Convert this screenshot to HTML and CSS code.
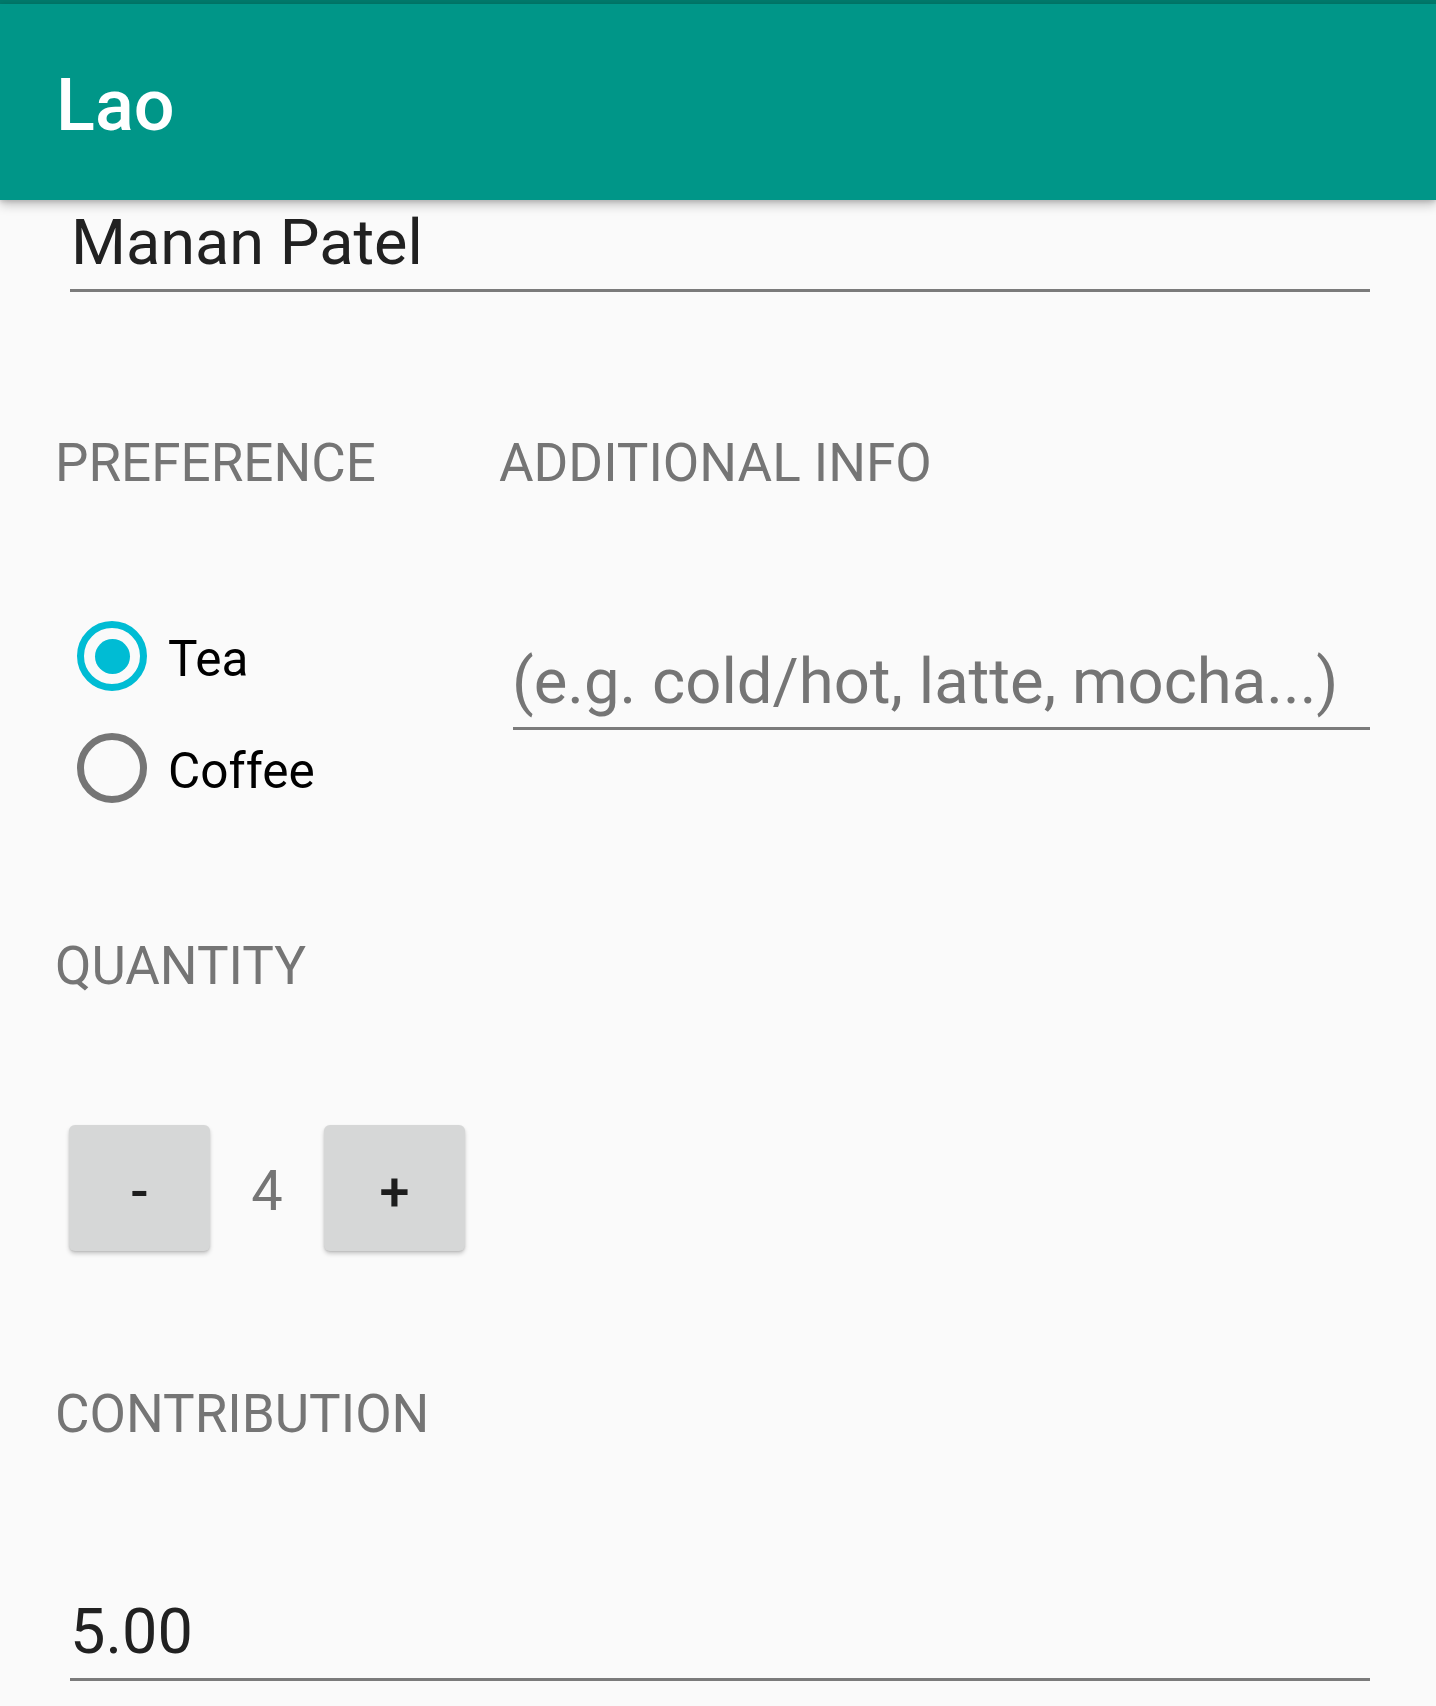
FILE: index.html
```html
<!DOCTYPE html>
<html lang="en">
<head>
<meta charset="utf-8">
<title>Lao</title>
<link rel="stylesheet" href="styles.css">
</head>
<body>
<div class="statusbar"></div>
<header class="toolbar"><h1 class="title">Lao</h1></header>
<main class="content">
  <div class="field name-field"><span class="field-text">Manan Patel</span></div>

  <div class="pref-row">
    <div class="col-pref">
      <div class="label">PREFERENCE</div>
      <div class="radio-group">
        <div class="radio-row">
          <span class="radio checked"><span class="dot"></span></span>
          <span class="radio-label">Tea</span>
        </div>
        <div class="radio-row">
          <span class="radio"></span>
          <span class="radio-label">Coffee</span>
        </div>
      </div>
    </div>
    <div class="col-info">
      <div class="label">ADDITIONAL INFO</div>
      <div class="field info-field"><span class="field-text placeholder">(e.g. cold/hot, latte, mocha...)</span></div>
    </div>
  </div>

  <div class="label quantity-label">QUANTITY</div>
  <div class="stepper">
    <button class="step-btn minus">-</button>
    <span class="qty">4</span>
    <button class="step-btn plus">+</button>
  </div>

  <div class="label contribution-label">CONTRIBUTION</div>
  <div class="field amount-field"><span class="field-text">5.00</span></div>
</main>
</body>
</html>
```

FILE: styles.css
```css
* { box-sizing: border-box; }

html, body {
  margin: 0;
  padding: 0;
  background: #fafafa;
  font-family: Roboto, "Noto Sans", "Liberation Sans", sans-serif;
}

body {
  width: 1436px;
  min-height: 1706px;
  overflow: hidden;
}

.statusbar {
  height: 4px;
  background: #00796b;
}

.toolbar {
  position: relative;
  z-index: 2;
  height: 196px;
  padding: 7px 0 0 56px;
  background: #009688;
  box-shadow: 0 5px 10px rgba(0, 0, 0, 0.22), 0 2px 4px rgba(0, 0, 0, 0.12);
}

.title {
  margin: 0;
  font-size: 72px;
  font-weight: 500;
  line-height: 189px;
  color: #ffffff;
}

.content {
  padding-left: 55px;
}

.field {
  border-bottom: 3px solid #7b7b7b;
  line-height: 74px;
  font-size: 63px;
  color: #212121;
  white-space: nowrap;
}

.name-field {
  margin: 0 66px 0 15px;
  padding: 6px 0 9px 0;
  text-indent: 1px;
}

.label {
  font-size: 53px;
  line-height: 62px;
  color: #757575;
  white-space: nowrap;
}

.pref-row {
  display: flex;
  margin-top: 140px;
}

.col-pref {
  width: 444px;
  flex: none;
}

.col-info {
  flex: 1;
}

.radio-group {
  margin-top: 106px;
}

.radio-row {
  display: flex;
  align-items: center;
  height: 112px;
  padding-left: 22px;
}

.radio {
  display: flex;
  align-items: center;
  justify-content: center;
  width: 70px;
  height: 70px;
  border: 7px solid #757575;
  border-radius: 50%;
  flex: none;
}

.radio.checked {
  border-color: #00bcd4;
}

.dot {
  width: 35px;
  height: 35px;
  border-radius: 50%;
  background: #00bcd4;
}

.radio-label {
  margin: 6px 0 0 21px;
  font-size: 49.5px;
  line-height: 50px;
  color: #000000;
}

.info-field {
  margin: 150px 66px 0 14px;
  padding: 0 0 9px 0;
  text-indent: -1px;
  font-size: 63.4px;
}

.placeholder {
  color: #757575;
}

.quantity-label {
  margin-top: 111px;
}

.stepper {
  display: flex;
  align-items: center;
  margin: 128px 0 0 14px;
}

.step-btn {
  width: 141px;
  height: 126px;
  padding: 7px 0 0 0;
  border: none;
  border-radius: 6px;
  background: #d6d7d7;
  box-shadow: 0 3px 4px rgba(0, 0, 0, 0.18), 0 1px 2px rgba(0, 0, 0, 0.1);
  font-family: Roboto, "Noto Sans", "Liberation Sans", sans-serif;
  font-size: 54px;
  font-weight: 500;
  color: #1d1d1d;
  line-height: 1;
}

.qty {
  width: 114px;
  text-align: center;
  font-size: 56px;
  color: #757575;
  margin-top: 6px;
}

.contribution-label {
  margin-top: 132px;
}

.amount-field {
  margin: 150px 66px 0 15px;
  padding: 0 0 9px 0;
  text-indent: 0;
}
```
